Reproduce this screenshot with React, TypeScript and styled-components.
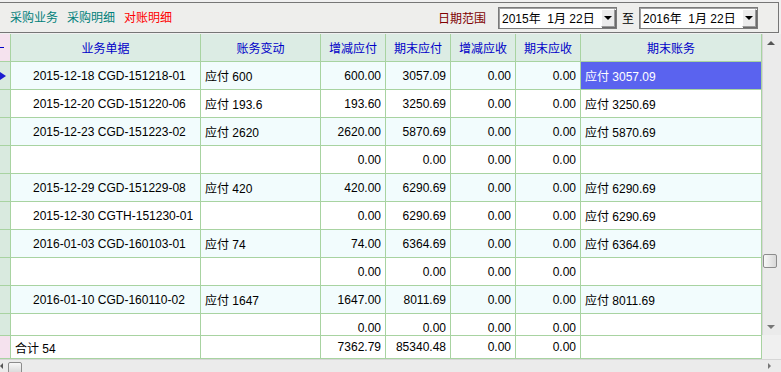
import React from "react";
import styled, { createGlobalStyle } from "styled-components";

const Global = createGlobalStyle`
  html, body { margin: 0; padding: 0; background: #f0f0f0; }
  body { font-family: "Liberation Sans", "Noto Sans CJK SC", sans-serif; font-size: 12px; }
`;

const COLS = "11px 190px 120px 65px 65px 65px 65px 181px";
const LINE = "#a8d3a1";

const Page = styled.div`
  width: 781px;
  height: 372px;
  overflow: hidden;
  display: flex;
  flex-direction: column;
  background: #f0f0f0;
  padding-top: 2px;
  box-sizing: border-box;
`;

const Toolbar = styled.div`
  width: 779px;
  height: 32px;
  box-sizing: border-box;
  border-top: 1px solid #767676;
  border-right: 1px solid #767676;
  border-bottom: 1px solid #767676;
  background: #eeeeec;
  display: flex;
  align-items: center;
  padding-left: 10px;
  padding-right: 20px;
  margin-bottom: 1px;
`;

const Tab = styled.span<{ $color: string }>`
  color: ${(p) => p.$color};
  font-size: 12px;
  margin-right: 9px;
  line-height: 14px;
`;

const Spacer = styled.div`
  flex: 1;
`;

const RangeLabel = styled.span`
  color: #800000;
  font-size: 12px;
  margin-right: 12px;
`;

const DateBox = styled.div`
  width: 119px;
  height: 22px;
  box-sizing: border-box;
  border: 1px solid #7a7a7a;
  box-shadow: inset 1px 1px 0 #a0a0a0;
  background: #ffffff;
  display: flex;
  align-items: center;
  padding-left: 3px;
  padding-right: 1px;
`;

const DateText = styled.span`
  flex: 1;
  color: #000;
  font-size: 12px;
  white-space: pre;
`;

const DropBtn = styled.div`
  width: 14px;
  height: 18px;
  box-sizing: border-box;
  background: #ececec;
  border: 1px solid #9a9a9a;
  border-top-color: #ffffff;
  border-left-color: #ffffff;
  box-shadow: 1px 1px 0 #6a6a6a;
  display: flex;
  align-items: center;
  justify-content: center;
`;

const Arrow = styled.span<{ $dir: "down" | "up" | "left" | "right"; $c?: string }>`
  width: 0;
  height: 0;
  border: 4px solid transparent;
  ${(p) =>
    p.$dir === "down"
      ? `border-top: 4px solid ${p.$c || "#000"}; border-bottom: 0;`
      : p.$dir === "up"
      ? `border-bottom: 4px solid ${p.$c || "#000"}; border-top: 0;`
      : p.$dir === "left"
      ? `border-right: 4px solid ${p.$c || "#000"}; border-left: 0; border-width: 3px;`
      : `border-left: 4px solid ${p.$c || "#000"}; border-right: 0; border-width: 3px;`}
`;

const To = styled.span`
  font-size: 12px;
  color: #000;
  margin: 0 5px;
`;

const Main = styled.div`
  display: flex;
  flex-direction: row;
`;

const Table = styled.div`
  width: 762px;
  display: flex;
  flex-direction: column;
`;

const Row = styled.div<{ $bg?: string; $h: number }>`
  display: grid;
  grid-template-columns: ${COLS};
  height: ${(p) => p.$h}px;
  flex: none;
  background: ${(p) => p.$bg || "#fff"};
`;

const Body = styled.div`
  height: 273px;
  overflow: hidden;
  display: flex;
  flex-direction: column;
`;

const Footer = styled.div`
  border-top: 1px solid ${LINE};
`;

const Cell = styled.div<{ $align?: "left" | "right" | "center"; $pl?: number; $bg?: string; $color?: string }>`
  box-sizing: border-box;
  border-right: 1px solid ${LINE};
  border-bottom: 1px solid ${LINE};
  display: flex;
  align-items: center;
  justify-content: ${(p) => (p.$align === "right" ? "flex-end" : p.$align === "center" ? "center" : "flex-start")};
  padding-left: ${(p) => p.$pl ?? 4}px;
  padding-right: 4px;
  white-space: nowrap;
  overflow: hidden;
  background: ${(p) => p.$bg || "transparent"};
  color: ${(p) => p.$color || "#000"};
  font-size: 12px;
`;

const HeadCell = styled(Cell)`
  color: #0000c8;
  background: #dcece4;
  justify-content: center;
  padding: 0;
`;

const Indicator = styled.div<{ $pink?: boolean }>`
  box-sizing: border-box;
  border-right: 1px solid ${LINE};
  border-bottom: 1px solid ${LINE};
  background: ${(p) => (p.$pink ? "#f5e2ee" : "#d9eadf")};
  display: flex;
  align-items: center;
  overflow: hidden;
`;

const Dash = styled.span`
  width: 4px;
  height: 1px;
  background: #0000c8;
`;

const VScroll = styled.div`
  width: 19px;
  height: 301px;
  display: flex;
  flex-direction: column;
  background: #ebebeb;
  border-left: 1px solid #d6d6d6;
  box-sizing: border-box;
`;

const ScrollBtn = styled.div`
  height: 17px;
  flex: none;
  display: flex;
  align-items: center;
  justify-content: center;
  padding-right: 3px;
`;

const Track = styled.div`
  flex: 1;
  display: flex;
  flex-direction: column;
`;

const VThumb = styled.div`
  width: 14px;
  height: 14px;
  box-sizing: border-box;
  border: 1px solid #8c8c8c;
  border-radius: 2px;
  background: linear-gradient(to right, #f8f8f8, #d8d8d8);
`;

const HScroll = styled.div`
  height: 12px;
  display: flex;
  align-items: center;
  background: #ebebeb;
  border-top: 1px solid #d6d6d6;
`;

const HThumb = styled.div`
  width: 14px;
  height: 12px;
  box-sizing: border-box;
  border: 1px solid #8c8c8c;
  border-radius: 2px;
  background: linear-gradient(to bottom, #f8f8f8, #d8d8d8);
  margin-left: 5px;
  margin-top: 4px;
`;

const HSpacer = styled.div`
  flex: 1;
`;

type R = { doc: string; change: string; p: string; pe: string; r: string; re: string; end: string };

const rows: R[] = [
  { doc: "2015-12-18 CGD-151218-01", change: "应付 600", p: "600.00", pe: "3057.09", r: "0.00", re: "0.00", end: "应付 3057.09" },
  { doc: "2015-12-20 CGD-151220-06", change: "应付 193.6", p: "193.60", pe: "3250.69", r: "0.00", re: "0.00", end: "应付 3250.69" },
  { doc: "2015-12-23 CGD-151223-02", change: "应付 2620", p: "2620.00", pe: "5870.69", r: "0.00", re: "0.00", end: "应付 5870.69" },
  { doc: "", change: "", p: "0.00", pe: "0.00", r: "0.00", re: "0.00", end: "" },
  { doc: "2015-12-29 CGD-151229-08", change: "应付 420", p: "420.00", pe: "6290.69", r: "0.00", re: "0.00", end: "应付 6290.69" },
  { doc: "2015-12-30 CGTH-151230-01", change: "", p: "0.00", pe: "6290.69", r: "0.00", re: "0.00", end: "应付 6290.69" },
  { doc: "2016-01-03 CGD-160103-01", change: "应付 74", p: "74.00", pe: "6364.69", r: "0.00", re: "0.00", end: "应付 6364.69" },
  { doc: "", change: "", p: "0.00", pe: "0.00", r: "0.00", re: "0.00", end: "" },
  { doc: "2016-01-10 CGD-160110-02", change: "应付 1647", p: "1647.00", pe: "8011.69", r: "0.00", re: "0.00", end: "应付 8011.69" },
  { doc: "", change: "", p: "0.00", pe: "0.00", r: "0.00", re: "0.00", end: "" },
];

const headers = ["业务单据", "账务变动", "增减应付", "期末应付", "增减应收", "期末应收", "期末账务"];

export default function App() {
  return (
    <>
      <Global />
      <Page>
        <Toolbar>
          <Tab $color="#00807a">采购业务</Tab>
          <Tab $color="#00807a">采购明细</Tab>
          <Tab $color="#ff0000">对账明细</Tab>
          <Spacer />
          <RangeLabel>日期范围</RangeLabel>
          <DateBox>
            <DateText>{"2015年  1月 22日"}</DateText>
            <DropBtn>
              <Arrow $dir="down" />
            </DropBtn>
          </DateBox>
          <To>至</To>
          <DateBox>
            <DateText>{"2016年  1月 22日"}</DateText>
            <DropBtn>
              <Arrow $dir="down" />
            </DropBtn>
          </DateBox>
        </Toolbar>
        <Main>
          <Table>
            <Row $h={28}>
              <Indicator $pink>
                <Dash />
              </Indicator>
              {headers.map((h) => (
                <HeadCell key={h}>{h}</HeadCell>
              ))}
            </Row>
            <Body>
              {rows.map((r, i) => {
                const bg = i % 2 === 0 ? "#f2fcfd" : "#ffffff";
                const sel = i === 0;
                return (
                  <Row key={i} $h={28} $bg={bg}>
                    <Indicator>
                      {sel && (
                        <svg width="7" height="10" viewBox="0 0 7 10">
                          <polygon points="0,1 6,5 0,9" fill="#1c1cd0" />
                        </svg>
                      )}
                    </Indicator>
                    <Cell $pl={22}>{r.doc}</Cell>
                    <Cell>{r.change}</Cell>
                    <Cell $align="right">{r.p}</Cell>
                    <Cell $align="right">{r.pe}</Cell>
                    <Cell $align="right">{r.r}</Cell>
                    <Cell $align="right">{r.re}</Cell>
                    <Cell $bg={sel ? "#5a63ef" : undefined} $color={sel ? "#ffffff" : undefined}>
                      {r.end}
                    </Cell>
                  </Row>
                );
              })}
            </Body>
            <Footer>
              <Row $h={23}>
                <Indicator $pink />
                <Cell>合计 54</Cell>
                <Cell />
                <Cell $align="right">7362.79</Cell>
                <Cell $align="right">85340.48</Cell>
                <Cell $align="right">0.00</Cell>
                <Cell $align="right">0.00</Cell>
                <Cell />
              </Row>
            </Footer>
          </Table>
          <VScroll>
            <ScrollBtn>
              <Arrow $dir="up" $c="#555" />
            </ScrollBtn>
            <Track>
              <VThumb style={{ marginTop: 203 }} />
            </Track>
            <ScrollBtn>
              <Arrow $dir="down" $c="#777" />
            </ScrollBtn>
          </VScroll>
        </Main>
        <HScroll>
          <Arrow $dir="left" $c="#555" />
          <HThumb />
          <HSpacer />
          <Arrow $dir="right" $c="#777" />
          <HSpacer style={{ flex: "none", width: 10 }} />
        </HScroll>
      </Page>
    </>
  );
}
